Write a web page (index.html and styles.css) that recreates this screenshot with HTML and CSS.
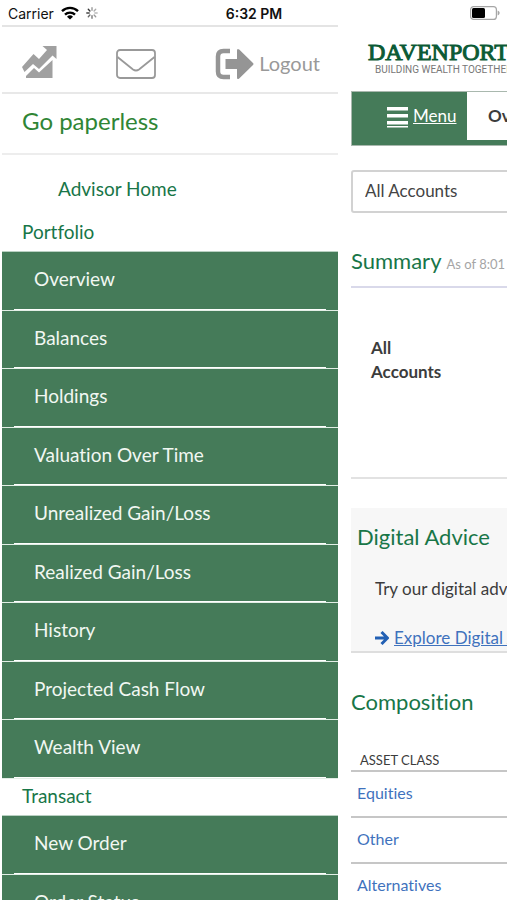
FILE: index.html
```html
<!DOCTYPE html>
<html lang="en">
<head>
<meta charset="utf-8">
<meta name="viewport" content="width=device-width, initial-scale=1">
<title>Davenport</title>
<link rel="stylesheet" href="styles.css">
</head>
<body>
<div class="screen">
  <header class="status">
    <div class="status-left">
      <span>Carrier</span>
      <svg class="wifi" viewBox="0 0 18 14" aria-hidden="true"><g fill="none" stroke="#000" stroke-width="2.4"><path d="M1 5.1a11.5 11.5 0 0 1 16 0"/><path d="M4 8.6a7.2 7.2 0 0 1 10 0"/></g><path d="M9 13.6 6 10.7a4.3 4.3 0 0 1 6 0z"/></svg>
      <svg class="spinner" viewBox="0 0 12 12" aria-hidden="true"><g stroke-width="1.4" stroke-linecap="round"><path stroke="#999" d="M6 .8v2.4"/><path stroke="#aaa" d="m9.7 2.3-1.6 1.6"/><path stroke="#bbb" d="M11.2 6H8.8"/><path stroke="#999" d="M9.7 9.7 8.1 8.1"/><path stroke="#777" d="M6 11.2V8.8"/><path stroke="#666" d="m2.3 9.7 1.6-1.6"/><path stroke="#444" d="M.8 6h2.4"/><path stroke="#333" d="m2.3 2.3 1.6 1.6"/></g></svg>
    </div>
    <time class="clock">6:32 PM</time>
    <svg class="battery" viewBox="0 0 30 14" aria-hidden="true"><rect x=".6" y=".6" width="25.8" height="12.8" rx="3" fill="#fff" stroke="#a6a6a6" stroke-width="1.2"/><rect x="2" y="2" width="13" height="10" rx="1.5"/><path d="M27.6 4.6v4.8c1.2-.4 2-1.3 2-2.4s-.8-2-2-2.4z" fill="#a6a6a6"/></svg>
  </header>
  <div class="panes">
    <aside class="drawer">
      <div class="tools">
        <a href="#" class="tool" aria-label="Performance"><svg class="chart" viewBox="0 0 36 34" aria-hidden="true"><g fill="#a0a0a0"><path d="M0 22 11.500 9l5.500 5 8-9-4.500-4H34.500v13l-4-3.500L17 24l-6-5L2.500 27z"/><path d="M4 33v-2l8-8 5 4.500L30.500 15V33z"/></g></svg></a>
        <a href="#" class="tool" aria-label="Messages"><svg class="mail" viewBox="0 0 40 30" aria-hidden="true"><g fill="none" stroke="#999" stroke-width="1.8"><rect x="1" y="1" width="38" height="28" rx="3"/><path d="m1.500 8 15.500 12.500q3 2 6 0L38.500 8"/></g></svg></a>
        <a href="#" class="tool logout"><svg class="exit" viewBox="0 0 40 32" aria-hidden="true"><path d="M15 3H8.500Q3 3 3 8.500v15Q3 29 8.500 29H15" fill="none" stroke="#959595" stroke-width="4.500"/><path d="M10.500 11H22V2.500Q22 0 24.200 1.500L38 15q1.200 1 0 2L24.200 30.500Q22 32 22 29.500V21H10.500z" fill="#959595"/></svg><span>Logout</span></a>
      </div>
      <div class="paperless"><a href="#">Go paperless</a></div>
      <nav class="side-nav" aria-label="Main">
        <a class="home" href="#">Advisor Home</a>
        <h2 class="group">Portfolio</h2>
        <ul class="items">
          <li><a href="#">Overview</a></li>
          <li><a href="#">Balances</a></li>
          <li><a href="#">Holdings</a></li>
          <li><a href="#">Valuation Over Time</a></li>
          <li><a href="#">Unrealized Gain/Loss</a></li>
          <li><a href="#">Realized Gain/Loss</a></li>
          <li><a href="#">History</a></li>
          <li><a href="#">Projected Cash Flow</a></li>
          <li><a href="#">Wealth View</a></li>
        </ul>
        <h2 class="group">Transact</h2>
        <ul class="items">
          <li><a href="#">New Order</a></li>
          <li><a href="#">Order Status</a></li>
        </ul>
      </nav>
    </aside>
    <main class="page">
      <div class="brand">
        <div class="brand-name">DAVENPORT</div>
        <div class="brand-tag">BUILDING WEALTH TOGETHER</div>
      </div>
      <div class="bar">
        <button type="button" class="menu"><svg viewBox="0 0 21 21" aria-hidden="true"><path fill="#fff" d="M0 0h21v3.500H0zM0 7h21v3.500H0zM0 14h21v3.500H0zM0 19h21v1.500H0z"/></svg><span>Menu</span></button>
        <a href="#" class="tab">Overview</a>
      </div>
      <select class="account" aria-label="Account"><option>All Accounts</option></select>
      <section class="summary">
        <h1>Summary <small>As of 8:01 AM</small></h1>
        <p>All<br>Accounts</p>
      </section>
      <section class="advice">
        <h2>Digital Advice</h2>
        <p>Try our digital advice</p>
        <a href="#"><svg viewBox="0 0 14 14" aria-hidden="true"><path d="M0 7h12M6.500 1 12.500 7l-6 6" fill="none" stroke="#2260b4" stroke-width="3"/></svg><span>Explore Digital Advice</span></a>
      </section>
      <section class="composition">
        <h2>Composition</h2>
        <table>
          <thead><tr><th scope="col">ASSET CLASS</th></tr></thead>
          <tbody>
            <tr><td><a href="#">Equities</a></td></tr>
            <tr><td><a href="#">Other</a></td></tr>
            <tr><td><a href="#">Alternatives</a></td></tr>
          </tbody>
        </table>
      </section>
    </main>
  </div>
</div>
</body>
</html>
```
FILE: styles.css
```css
* { box-sizing: border-box; }

body {
  margin: 0;
  background: #fff;
  color: #3c3c3c;
  font-family: Lato, "Open Sans", sans-serif;
  font-variant-ligatures: none;
}

h1, h2, p, ul { margin: 0; padding: 0; font-weight: 400; }
ul { list-style: none; }
a { color: inherit; text-decoration: none; }
svg { display: block; flex: none; }

.screen {
  display: flex;
  flex-direction: column;
  height: 100vh;
  overflow: hidden;
}

/* Status bar */
.status {
  display: grid;
  grid-template-columns: 1fr auto 1fr;
  align-items: center;
  flex: none;
  height: 25px;
  padding: 1px 7px 0 8px;
  color: #111;
  font: 14px Inter, sans-serif;
}
.status-left { display: flex; align-items: center; gap: 7px; }
.wifi { width: 18px; height: 14px; }
.spinner { width: 12px; height: 12px; }
.clock { font-weight: 600; }
.battery { width: 30px; height: 14px; justify-self: end; }

.panes { display: flex; flex: 1; min-height: 0; }

/* Drawer */
.drawer { flex: none; width: 66.67%; padding-left: 2px; }
.tools {
  display: flex;
  align-items: center;
  justify-content: space-between;
  height: 69px;
  padding: 8px 18px 0 20px;
  border-top: 2px solid #e4e4e4;
  border-bottom: 2px solid #e8e8e8;
}
.tool { display: flex; align-items: center; }
.chart { width: 36px; height: 34px; margin-bottom: 4px; }
.mail { width: 40px; height: 30px; margin-right: 2px; }
.exit { width: 40px; height: 32px; }
.logout { gap: 4px; color: #999; font-size: 20px; line-height: 20px; }
.logout span { padding-bottom: 2px; }
.paperless {
  height: 61px;
  padding: 11px 20px;
  border-bottom: 2px solid #ededed;
  color: #2f8535;
  font-size: 24px;
  line-height: 32px;
}
.home {
  display: block;
  padding: 22px 56px 0;
  color: #187648;
  font-size: 19px;
  line-height: 24px;
}
.group {
  height: 36px;
  padding: 0 20px;
  color: #187648;
  font-size: 19px;
  line-height: 34px;
}
.home + .group { margin-top: 14px; }
.items {
  display: grid;
  grid-auto-rows: 59px 58px;
  border-top: 1px solid #b9d0c2;
}
.items li {
  display: flex;
  flex-direction: column;
  border-bottom: 1px solid #e2eee6;
  background: #457b59;
}
.items a {
  flex: 1;
  margin: 0 12px;
  padding: 0 20px;
  border-bottom: 1px solid #fff;
  color: #f1f7f2;
  font-size: 19px;
  line-height: 54px;
}

/* Page behind the drawer */
.page { flex: none; width: 66.67%; padding-left: 13px; }
.brand { height: 66px; padding: 13px 17px 0; white-space: nowrap; }
.brand-name {
  color: #0b5a35;
  font: 24px/28px "Liberation Serif", serif;
  -webkit-text-stroke: 1px #0b5a35;
}
.brand-tag {
  padding-left: 7px;
  color: #777;
  font: 10px/8px Roboto, sans-serif;
}
.bar {
  display: flex;
  height: 55px;
  padding-bottom: 5px;
  border: 1px solid #a9b8ae;
  background: #457b59;
}
.menu {
  display: flex;
  align-items: center;
  gap: 5px;
  width: 115px;
  padding: 2px 0 0 35px;
  border: 0;
  background: none;
  color: #fff;
  font: 17px/20px Lato, sans-serif;
  text-decoration: underline;
}
.menu span { padding-bottom: 3px; }
.menu svg { width: 21px; height: 21px; }
.tab {
  flex: 1;
  padding-left: 21px;
  background: #fff;
  font-size: 17px;
  font-weight: 700;
  line-height: 48px;
}
.account {
  display: block;
  width: 100%;
  height: 43px;
  margin-top: 24px;
  padding: 0 12px 2px;
  border: 2px solid #d2d2d2;
  border-radius: 3px;
  appearance: none;
  background: #fff;
  color: #444;
  font: 17px Lato, sans-serif;
}
.summary { height: 266px; border-bottom: 2px solid #e2e2e2; }
.summary h1 {
  height: 75px;
  padding-top: 34px;
  border-bottom: 2px solid #d9d9ea;
  color: #187648;
  font-size: 22px;
  line-height: 28px;
}
.summary small { color: #a5a5a5; font-size: 13px; }
.summary p {
  padding: 48px 20px;
  font-size: 17px;
  font-weight: 700;
  line-height: 24px;
}
.advice {
  height: 145px;
  margin-top: 29px;
  padding: 15px 6px 0;
  border-bottom: 2px solid #dedede;
  background: #f7f7f7;
  white-space: nowrap;
}
.advice h2, .composition h2 { color: #187648; font-size: 22px; line-height: 28px; }
.advice p { padding: 26px 18px; font-size: 17px; line-height: 24px; }
.advice a {
  display: flex;
  align-items: center;
  gap: 5px;
  padding-left: 18px;
  color: #3f72bd;
  font-size: 17px;
  line-height: 22px;
}
.advice a span { text-decoration: underline; }
.advice svg { width: 14px; height: 14px; }
.composition { padding-top: 35px; }
.composition table { width: 100%; margin-top: 29px; border-collapse: collapse; }
.composition th {
  height: 26px;
  padding: 4px 9px 0;
  border-bottom: 2px solid #c6c6c6;
  font-size: 13px;
  font-weight: 400;
  text-align: left;
}
.composition td {
  height: 46px;
  padding: 0 6px 4px;
  border-bottom: 2px solid #c6c6c6;
  color: #3f72bd;
  font-size: 16px;
}
```
